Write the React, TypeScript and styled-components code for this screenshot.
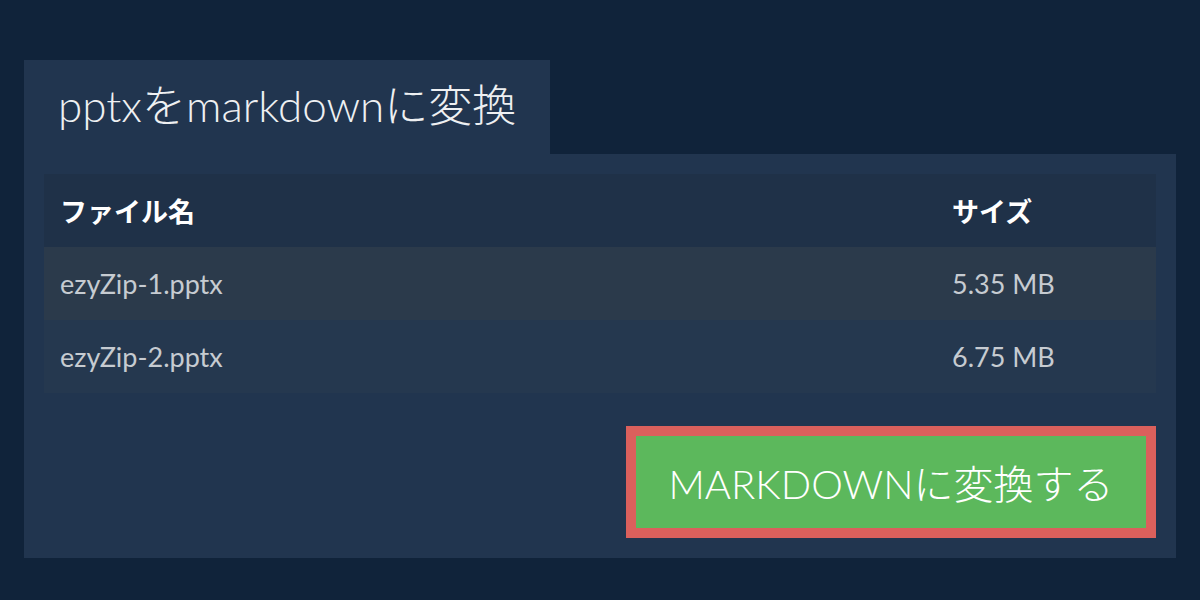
import styled, { createGlobalStyle } from "styled-components";

const GlobalStyle = createGlobalStyle`
  html, body {
    margin: 0;
    padding: 0;
    background: #10233a;
  }
  body {
    font-family: Lato, "Noto Sans CJK JP", sans-serif;
  }
`;

const Page = styled.div`
  width: 1200px;
  height: 600px;
  box-sizing: border-box;
  padding: 60px 24px 0 24px;
`;

const Tab = styled.h1`
  display: inline-flex;
  align-items: center;
  box-sizing: border-box;
  height: 94px;
  margin: 0;
  padding: 0 34px 8px 34px;
  background: #21354f;
  color: #eef0f2;
  font-family: Lato, "Noto Sans CJK JP", sans-serif;
  font-size: 44px;
  font-weight: 300;
`;

const Panel = styled.section`
  display: flex;
  flex-direction: column;
  align-items: flex-end;
  gap: 33px;
  box-sizing: border-box;
  width: 1152px;
  padding: 20px 20px 20px 20px;
  background: #21354f;
`;

const FileTable = styled.table`
  width: 100%;
  border-collapse: collapse;
  font-size: 28px;
`;

const HeadCell = styled.th<{ $w?: string }>`
  height: 73px;
  padding: 0 16px;
  text-align: left;
  background: #1f3148;
  color: #ffffff;
  font-weight: 700;
  font-size: 27px;
  width: ${(p) => p.$w || "auto"};
`;

const Row = styled.tr<{ $striped?: boolean }>`
  background: ${(p) => (p.$striped ? "#2b3a4b" : "#25384f")};
`;

const Cell = styled.td<{ $w?: string }>`
  height: 73px;
  padding: 0 16px;
  color: #c6cbd1;
  font-size: 27px;
  width: ${(p) => p.$w || "auto"};
`;

const ConvertButton = styled.button`
  box-sizing: border-box;
  width: 530px;
  height: 112px;
  border: 10px solid #db605c;
  background: #5cb85c;
  color: #ffffff;
  font-family: Lato, "Noto Sans CJK JP", sans-serif;
  font-size: 40px;
  font-weight: 300;
  cursor: pointer;
`;

const files = [
  { name: "ezyZip-1.pptx", size: "5.35 MB" },
  { name: "ezyZip-2.pptx", size: "6.75 MB" },
];

export default function App() {
  return (
    <>
      <GlobalStyle />
      <Page>
        <Tab>pptxをmarkdownに変換</Tab>
        <Panel>
          <FileTable>
            <thead>
              <tr>
                <HeadCell>ファイル名</HeadCell>
                <HeadCell $w="188px">サイズ</HeadCell>
              </tr>
            </thead>
            <tbody>
              {files.map((f, i) => (
                <Row key={f.name} $striped={i % 2 === 0}>
                  <Cell>{f.name}</Cell>
                  <Cell $w="188px">{f.size}</Cell>
                </Row>
              ))}
            </tbody>
          </FileTable>
          <ConvertButton>MARKDOWNに変換する</ConvertButton>
        </Panel>
      </Page>
    </>
  );
}
